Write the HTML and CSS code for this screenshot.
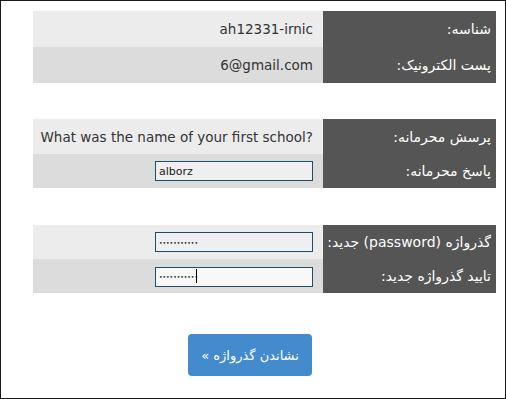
FILE: index.html
```html
<!DOCTYPE html>
<html lang="fa" dir="rtl">
<head>
<meta charset="utf-8">
<link rel="stylesheet" href="styles.css">
</head>
<body>
<div class="frame">
  <div class="table t1">
    <div class="label r36">شناسه:</div>
    <div class="value light r36"><span dir="ltr">ah12331-irnic</span></div>
    <div class="label r36">پست الکترونیک:</div>
    <div class="value dark r36"><span dir="ltr">6@gmail.com</span></div>
  </div>
  <div class="table t2">
    <div class="label r35">پرسش محرمانه:</div>
    <div class="value light r35"><span dir="ltr">What was the name of your first school?</span></div>
    <div class="label r34">پاسخ محرمانه:</div>
    <div class="value dark r34"><input class="field" type="text" value="alborz" dir="ltr"></div>
  </div>
  <div class="table t3">
    <div class="label r34">گذرواژه (password) جدید:</div>
    <div class="value light r34"><input class="field pass" type="password" value="1234567890a" dir="ltr"></div>
    <div class="label r34">تایید گذرواژه جدید:</div>
    <div class="value dark r34"><span class="wrap"><input class="field pass focus" type="password" value="1234567890a" dir="ltr"><span class="caret"></span></span></div>
  </div>
  <div class="actions">
    <button class="btn" type="button">نشاندن گذرواژه »</button>
  </div>
</div>
</body>
</html>
```
FILE: styles.css
```css
html, body {
  margin: 0;
  padding: 0;
  background: #fff;
}
.frame {
  box-sizing: border-box;
  width: 506px;
  height: 399px;
  border: 1px solid #1a1a1a;
  direction: rtl;
  font-family: "DejaVu Sans", sans-serif;
  font-size: 13px;
  padding: 10px 9px 0 31px;
}
.table {
  display: grid;
  grid-template-columns: 173px 290px;
}
.t2 { margin-top: 36px; }
.t3 { margin-top: 37px; }
.r36 { height: 36px; }
.r35 { height: 35px; }
.r34 { height: 34px; }
.label {
  background: #555555;
  color: #ffffff;
  display: flex;
  align-items: center;
  padding-right: 5px;
  font-size: 14px;
}
.value {
  display: flex;
  align-items: center;
  padding-right: 10px;
  color: #333;
  font-size: 13.5px;
}
.light { background: #ececec; }
.dark { background: #dcdcdc; }
.wrap {
  position: relative;
  display: inline-block;
  height: 20px;
}
.field {
  box-sizing: border-box;
  width: 158px;
  height: 20px;
  margin: 0;
  border: 1px solid #1f4f66;
  background: #efeef0;
  font-family: "DejaVu Sans", sans-serif;
  font-size: 11px;
  color: #222;
  padding: 0 3px;
  text-align: left;
  outline: none;
}
.pass {
  font-size: 6px;
}
.focus { background: #f8f8f8; }
.caret {
  position: absolute;
  left: 41px;
  top: 3px;
  width: 1px;
  height: 14px;
  background: #000;
}
.actions {
  margin-top: 41px;
  display: flex;
  justify-content: center;
  padding-right: 28px;
}
.btn {
  width: 124px;
  height: 42px;
  border: none;
  border-radius: 4px;
  background: #438bcc;
  color: #fff;
  font-family: "DejaVu Sans", sans-serif;
  font-size: 13px;
  direction: rtl;
  padding: 0;
}
```
